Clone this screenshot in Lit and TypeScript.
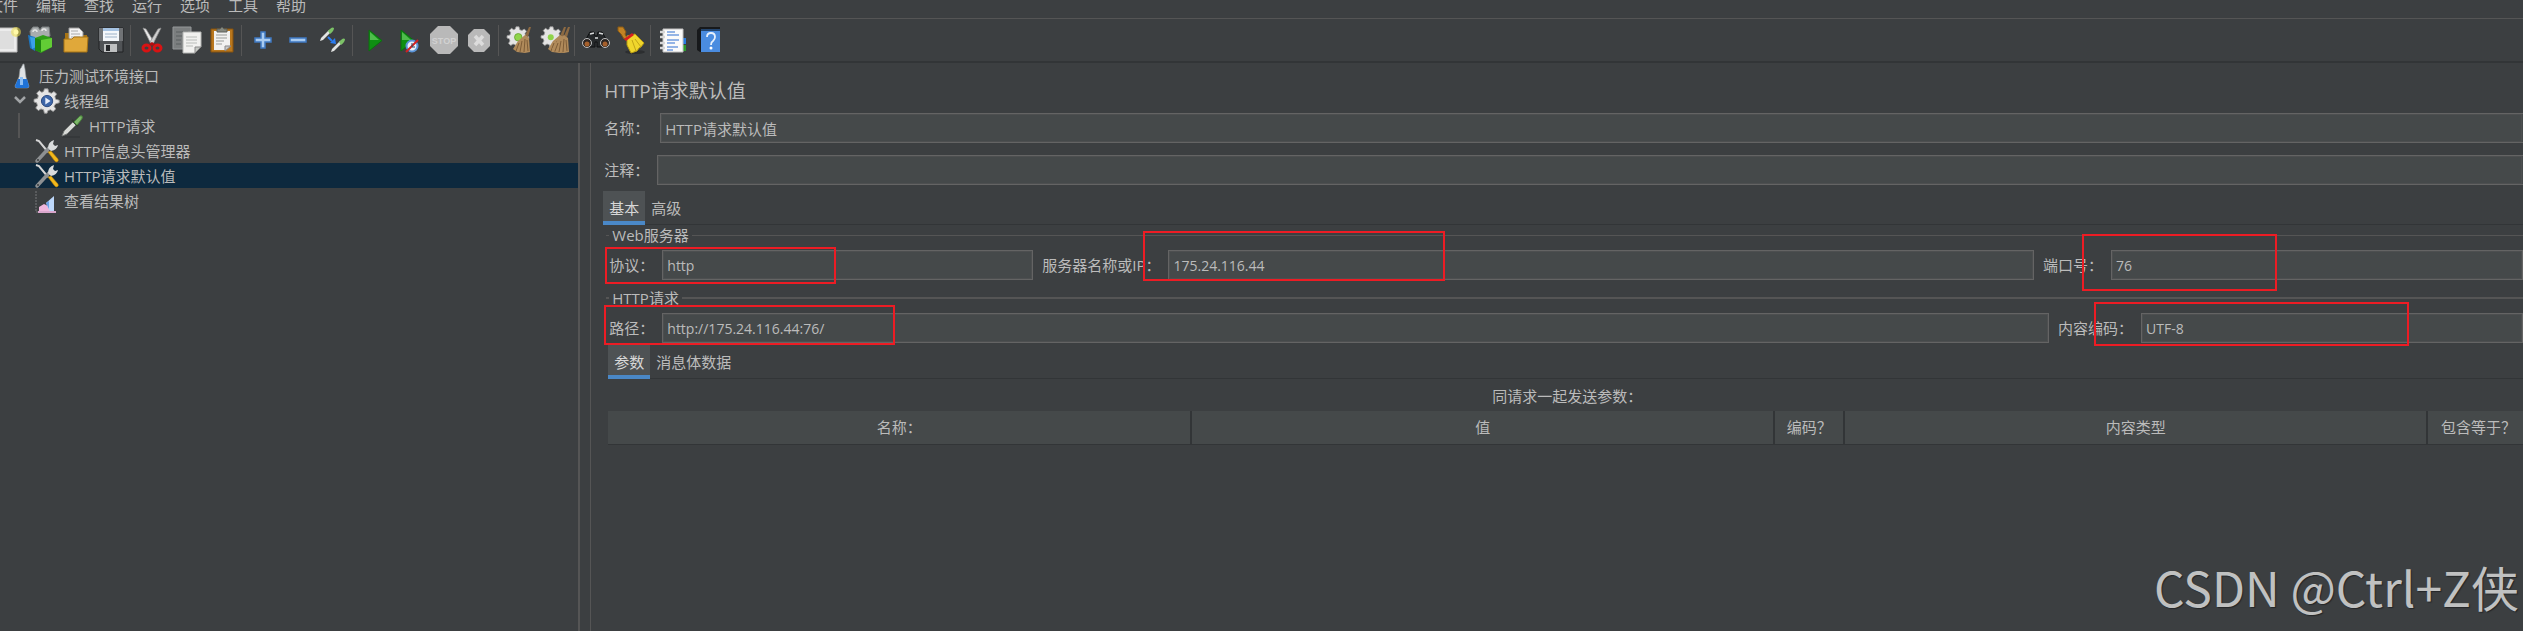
import { LitElement, html, css, svg, nothing, type TemplateResult } from "lit";
import { customElement, state } from "lit/decorators.js";

const dropper = svg`
  <path d="M2 22l2-5 9-9 3 3-9 9z" fill="#d9dbd8" stroke="#777a78" stroke-width="1"/>
  <path d="M12 6l6 6" stroke="#2e3a2c" stroke-width="2"/>
  <path d="M14 8l4-4q2-3 4-2 1 2-1 4l-4 5z" fill="#7db56a" stroke="#4b8a3c" stroke-width="1"/>`;

const gear = svg`
  <path d="M12 1h4l1 4 3 1 3-2 3 3-2 3 1 3 4 1v3l-4 1-2 3 2 3-3 3-3-2-3 1-1 3h-3l-1-4-3-1-3 2-3-3 2-3-1-3-3-1v-3l4-1 1-3-2-3 3-3 3 2 2-1z" fill="#e4e4e4" stroke="#9a9a9a" stroke-width="1"/>`;

const brush = svg`
  <path d="M23 1l2 0-3 10-3-1z" fill="#8d6a42"/>
  <path d="M12 15l7-6 4 3 1 14-5 1-8-1-4-3z" fill="#b08a5a"/>
  <path d="M13 17l-3 8m6-10-2 11m5-13-1 13m3-12 1 11" stroke="#7d5c37" stroke-width="1" fill="none"/>`;

const icons: Record<string, TemplateResult> = {
  new: svg`<path d="M3 2h22v24H3z" fill="#ececec" stroke="#bdbdbd"/><path d="M6 5h16v18H6z" fill="#dedede"/>
    <circle cx="24" cy="6" r="5" fill="#f2e24c" opacity=".55"/><circle cx="24" cy="6" r="2.5" fill="#fff9a8"/>`,
  templates: svg`<path d="M3 5l3-4h5l2 3 2-3h7l1 9-6 3-13 1z" fill="#a9adae" stroke="#7d8182"/>
    <path d="M6 6a2 2 0 0 1 4 0m5-1a2 2 0 0 1 4 0" fill="none" stroke="#e6e6e6" stroke-width="1.5"/>
    <path d="M1 9l7 2v14l-5-3z" fill="#1d77c2"/><path d="M3 11l8 1v8l-6 3z" fill="#3ba0e8"/>
    <path d="M8 12l8-3 9 3v9l-11 6-6-3z" fill="#2f9e17"/><path d="M14 14l11-2v9l-11 5z" fill="#62cc35"/><path d="M8 12l6 2v12l-6-2z" fill="#1f8511"/>`,
  open: svg`<path d="M3 7h6l2 2h14v17H3z" fill="#a87414"/><path d="M7 2h10l4 4v11H7z" fill="#f3f3f3" stroke="#999"/>
    <path d="M9 5h7M9 8h9M9 11h9" stroke="#aaa"/><path d="M2 13h8l2-2h14l-1 15H2z" fill="#e0a83a" stroke="#a87414"/>`,
  save: svg`<path d="M2 2h24v24H5l-3-3z" fill="#505356" stroke="#202224"/><path d="M2 2h24v13H2z" fill="#707376"/><path d="M6 2h16v13H6z" fill="#f4f7fa"/>
    <path d="M6 2h16v3H6z" fill="#a6c3e2"/><path d="M8 8h12M8 11h12" stroke="#9db2c8"/><path d="M7 18h13v8H7z" fill="#bfc1c2"/><path d="M9 19h4v6H9z" fill="#26282a"/>`,
  cut: svg`<path d="M5 2l3 1 8 13-3 2z" fill="#e8e8e8" stroke="#8d8d8d" stroke-width=".7"/><path d="M23 2l-3 1-8 13 3 2z" fill="#cfcfcf" stroke="#8d8d8d" stroke-width=".7"/>
    <ellipse cx="8.500" cy="22" rx="3.500" ry="3" fill="none" stroke="#d81313" stroke-width="3"/><ellipse cx="19.500" cy="22" rx="3.500" ry="3" fill="none" stroke="#d81313" stroke-width="3"/><path d="M11 18l3-2 3 2-3 2z" fill="#b50c0c"/>`,
  copy: svg`<path d="M0 1h18v22H0z" fill="#7b7e7f" stroke="#95989a"/><path d="M3 6h12M3 10h6M3 14h5M3 18h5" stroke="#5b5e60"/>
    <path d="M10 6h18v15l-6 6H10z" fill="#f1f1ef" stroke="#b4b6b4"/><path d="M13 11h11M13 14h11M13 17h11M13 20h7" stroke="#b9bcb9"/><path d="M22 27v-6h6z" fill="#c4c7c2" stroke="#888"/>`,
  paste: svg`<path d="M3 3h22v23H3z" fill="#b9771d" stroke="#85530e"/><path d="M6 5h16v15l-4 4H6z" fill="#f2f2f0"/>
    <path d="M8 9h11M8 12h11M8 15h8M8 18h6" stroke="#999c98"/><path d="M9 6V3h3l2-2 2 2h3v3z" fill="#85887f" stroke="#5d605a"/><path d="M17 25v-5h6z" fill="#ccc" stroke="#888"/>`,
  plus: svg`<path d="M12 6h4v6h6v4h-6v6h-4v-6H6v-4h6z" fill="#a9cbf0" stroke="#3f7ac2" stroke-width="1.500"/>`,
  minus: svg`<path d="M6 12h16v4H6z" fill="#a9cbf0" stroke="#3f7ac2" stroke-width="1.500"/>`,
  toggle: svg`<path d="M1 15l1-3 8-8 2 2-8 8z" fill="#e2e4e2"/><path d="M9 5q4-5 6-3 0 3-4 6z" fill="#7cc267"/>
    <path d="M12 26l1-3 8-8 2 2-8 8z" fill="#e2e4e2"/><path d="M20 16q4-5 6-3 0 3-4 6z" fill="#7cc267"/>
    <path d="M9 11l4 4" stroke="#2b7cf0" stroke-width="2"/><path d="M17 18l-6-1 5-5z" fill="#2b7cf0"/>`,
  play: svg`<path d="M9 4l13 10.500L9 25z" fill="#0e8f12" stroke="#0c6e0f"/><path d="M10 6l9 8h-9z" fill="#4fbd4c"/>`,
  playNow: svg`<path d="M6 4l13 10.500L6 25z" fill="#0e8f12" stroke="#0c6e0f"/><path d="M7 6l9 8H7z" fill="#4fbd4c"/>
    <circle cx="17" cy="20" r="5.500" fill="#e8f0fa" stroke="#5a93d6" stroke-width="2"/><path d="M11 26l12-12" stroke="#d32020" stroke-width="2"/><path d="M17 17v4h3" stroke="#30485f" fill="none"/>`,
  stop: svg`<path d="M8 0h12l8 8v12l-8 8H8l-8-8V8z" fill="#b9b9b9"/><text x="14" y="18" text-anchor="middle" font-size="9" font-weight="700" fill="#d2d2d2" font-family="Liberation Sans, sans-serif">STOP</text>`,
  shutdown: svg`<path d="M9 3h10l6 6v11l-6 6H9l-6-6V9z" fill="#b9b9b9"/><path d="M10 10l8 9m0-9l-8 9" stroke="#dcdcdc" stroke-width="3.500"/>`,
  clear: svg`<g transform="translate(1 0) scale(.75)">${gear}<circle cx="15" cy="15" r="5" fill="#8fd44a" stroke="#5f9e2a"/></g>${brush}`,
  clearAll: svg`<g transform="translate(0 0) scale(.75)">${gear}<circle cx="13" cy="15" r="4" fill="#8fd44a"/></g>${brush}<g transform="translate(4 0)">${brush}</g>`,
  find: svg`<path d="M4 13l4-7h4l1 4h2l1-4h4l4 7v8h-9v-5h-2v5H4z" fill="#26292b" stroke="#0f1112"/>
    <path d="M8 8l4-1M17 7l4 1M13 12h3" stroke="#d8dadb" stroke-width="1.500"/><circle cx="5" cy="17" r="4.500" fill="#2b2522" stroke="#bfc1c2"/><circle cx="23" cy="17" r="4.500" fill="#2b2522" stroke="#bfc1c2"/><circle cx="5" cy="18" r="2.500" fill="#a5602c"/><circle cx="23" cy="18" r="2.500" fill="#a5602c"/>`,
  broom: svg`<ellipse cx="18" cy="26" rx="10" ry="2" fill="#2c2e30"/><path d="M1 1h5l3 5-1 2 2 4-3 1-3-5-3-3z" fill="#c28324" stroke="#8a5a12"/>
    <path d="M10 10l8-2 9 9-3 4-2 1-2 3-6 2-4-8z" fill="#f0d62c" stroke="#b79b12"/><path d="M15 14l4 11m-1-12l6 8" stroke="#c2a417"/><path d="M7 13l8-6 2 2-8 6z" fill="#d62020"/>`,
  log: svg`<path d="M22 12h6v6h-6z" fill="#2a7de0"/><path d="M22 19h6v6h-6z" fill="#2b9a2b"/><path d="M5 3h20v23H5z" fill="#fafafa" stroke="#c2c2c2"/>
    <path d="M9 6h8M9 9h12M9 14h12M9 17h8M9 21h11M9 24h6" stroke="#2f6fd0" stroke-width="1.200"/><path d="M2 6h5M2 11h5M2 17h5M2 22h5" stroke="#d6d6d6" stroke-width="2.500"/>`,
  help: svg`<path d="M4 4l3-3h20v25H7l-3-2z" fill="#17191b"/><path d="M8 3h19v23H8z" fill="#4a8ce0"/><path d="M8 3h19v2H8z" fill="#24466f"/>
    <path d="M14 11q0-4 4-4t4 4q0 2-2 4-2 1-2 4" fill="none" stroke="#e6f0fc" stroke-width="1.800"/><circle cx="18" cy="22" r="1.500" fill="#fff"/>`,
  flask: svg`<path d="M11 4l2-4h1l1 5 1 8 3 9q0 2-2 2H7q-2 0-2-2l4-9 1-8z" fill="#dfe3e6" stroke="#8c9194" stroke-width=".6"/><path d="M8 15h9l2 7q0 2-2 2H7q-2 0-2-2z" fill="#1f73d8"/><path d="M10 13h3v8h-3z" fill="#8ec0f5"/>`,
  threads: svg`<g transform="translate(-1 -1) scale(.87)">${gear}<circle cx="15" cy="15" r="6.500" fill="#3d66a8" stroke="#1f3f78"/><path d="M13 11l6 4-6 4z" fill="#e6eefb"/></g>`,
  dropper: svg`<path d="M2 23h18" stroke="#2f3234"/>${dropper}`,
  tools: svg`<path d="M1 1l3 1 9 11" fill="none" stroke="#d6d6d6" stroke-width="2"/><path d="M13 13l3-1 7 8q1 2-1 3-2 0-3-2z" fill="#f3b81b" stroke="#b98308" stroke-width=".6"/>
    <path d="M2 22l12-13" stroke="#8d9092" stroke-width="3.500" stroke-linecap="round"/><path d="M13 9q0-6 6-8l-1 4 2 2 3-1q-1 5-7 6z" fill="#d9dbdc"/><circle cx="3" cy="21" r="1" fill="#3c3f41"/>`,
  chart: svg`<path d="M1 2v21h20" fill="none" stroke="#77797b" stroke-dasharray="2 1"/><path d="M4 23v-5l5-3 4 2 3-3 3 9z" fill="#efb6dd"/><path d="M11 14l8-7v16h-4z" fill="#bcd7fa"/><path d="M11 14l3-2v8z" fill="#6aa0e6"/><path d="M3 22h18v2H3z" fill="#d9a6cc"/>`,
};

const toolbar: [string, string][][] = [
  [["new", "新建"], ["templates", "模板"], ["open", "打开"], ["save", "保存"]],
  [["cut", "剪切"], ["copy", "复制"], ["paste", "粘贴"]],
  [["plus", "展开"], ["minus", "折叠"], ["toggle", "切换"]],
  [["play", "启动"], ["playNow", "不停顿启动"], ["stop", "停止"], ["shutdown", "关闭"]],
  [["clear", "清除"], ["clearAll", "清除全部"]],
  [["find", "查找"], ["broom", "重置查找"]],
  [["log", "函数助手"], ["help", "帮助"]],
];

interface TreeNode { id: string; label: string; icon: string; level: number; open?: boolean; guide?: boolean }

const nodes: TreeNode[] = [
  { id: "plan", label: "压力测试环境接口", icon: "flask", level: 0, open: true },
  { id: "group", label: "线程组", icon: "threads", level: 1, open: true },
  { id: "request", label: "HTTP请求", icon: "dropper", level: 2, guide: true },
  { id: "headers", label: "HTTP信息头管理器", icon: "tools", level: 1 },
  { id: "defaults", label: "HTTP请求默认值", icon: "tools", level: 1 },
  { id: "results", label: "查看结果树", icon: "chart", level: 1 },
];

@customElement("app-root")
export class AppRoot extends LitElement {
  @state() private selected = "defaults";
  @state() private mainTab = "基本";
  @state() private bodyTab = "参数";

  static styles = css`
    :host {
      display: flex;
      flex-direction: column;
      position: relative;
      min-height: 100vh;
      overflow: hidden;
      background: #3c3f41;
      color: #bbbbbb;
      font: 15px/20px "Open Sans", "Noto Sans CJK SC", sans-serif;
    }
    * { box-sizing: border-box; }
    button, input { font: inherit; color: inherit; border: 0; padding: 0; margin: 0; background: none; }
    button { white-space: nowrap; }
    svg { display: block; overflow: visible; }

    .menu { display: flex; gap: 18px; height: 19px; border-bottom: 1px solid #555555; }
    .menu button { height: 20px; margin-top: -5px; }
    .menu button:first-child { margin-left: -12px; }

    .toolbar { display: flex; align-items: center; height: 44px; border-bottom: 2px solid #323537; }
    .tools { display: flex; align-items: center; }
    .tools:first-child { margin-left: -12px; }
    .tools + .tools::before { content: ""; width: 1px; height: 31px; margin: 0 3px 0 2px; background: #555555; }
    .tool { display: flex; justify-content: center; width: 35px; }

    .body { display: grid; grid-template-columns: 23% 10px minmax(0, 1fr); flex: 1; }
    .tree { border-right: 2px solid #555555; }
    .node { display: flex; align-items: center; width: 100%; height: 25px; text-align: left; }
    .node.selected { background: #0d293e; }
    .level0, .level1 { padding-left: 10px; }
    .level2 { padding-left: 18px; }
    .twist { width: 20px; margin-right: 5px; }
    .level0 .twist { width: 0; margin-right: 0; }
    .level2 .twist { width: 42px; margin-right: 0; }
    .node-icon { margin-right: 5px; }

    .content { border-left: 1px solid #555555; padding: 18px 0 0 12px; min-width: 0; }
    h1 { margin: 0 0 12px; padding-left: 1px; font-size: 19px; font-weight: 400; line-height: 20px; }
    .line { display: flex; align-items: center; gap: 11px; height: 30px; margin-bottom: 12px; padding-left: 1px; }
    .line.comment { margin-bottom: 6px; gap: 8px; }
    .line label, .field label { flex: none; }
    input { flex: 1; min-width: 0; height: 30px; padding: 0 4px; background: #45494a; border: 1px solid #646464; outline: 1px solid #4d4f50; outline-offset: -2px; }
    .line input { border-right: 0; }

    .tabs { display: flex; height: 34px; border-bottom: 1px solid #323537; }
    .tab { height: 34px; padding: 0 6px; }
    .tab.active { color: #d8d8d8; background: #4e5254; border-bottom: 4px solid #4a88c7; padding-top: 4px; }

    fieldset { margin: 0 0 0 3px; padding: 5px 0 8px 3px; min-width: 0; border: 0; border-top: 1px solid #555555; }
    fieldset.request { padding-bottom: 2px; border-top-width: 2px; }
    legend { height: 20px; padding: 0 3px; }
    .row { display: flex; gap: 9px; }
    .field { position: relative; display: flex; align-items: center; gap: 8px; min-width: 0; }
    .field input { font-size: 14px; }
    .protocol { flex: 424 1 0; }
    .server { flex: 992 1 0; }
    .port { flex: 480 1 0; }
    .path { flex: 1440 1 0; }
    .encoding { flex: 465 1 0; }

    .mark { position: absolute; border: 2px solid #ed1c24; pointer-events: none; }
    .protocol .mark { left: -4px; top: -3px; width: 231px; height: 37px; }
    .server .mark { left: 101px; top: -19px; width: 302px; height: 50px; }
    .port .mark { left: 39px; top: -16px; width: 195px; height: 57px; }
    .path .mark { left: -5px; top: -8px; width: 291px; height: 40px; }
    .encoding .mark { left: 36px; top: -11px; width: 315px; height: 44px; }

    .params { padding-left: 5px; }
    .caption { height: 32px; line-height: 34px; padding-left: 3px; text-align: center; }
    table { width: 100%; border-collapse: collapse; table-layout: fixed; }
    th { height: 33px; padding: 0; font-weight: 400; background: #45494a; border-right: 2px solid #323537; border-bottom: 1px solid #323537; }
    th:last-child { border-right: 0; padding-left: 6px; }
    .wide { width: 30.45%; }
    .narrow { width: 70px; }
    .last { width: 96px; }

    .watermark { position: absolute; right: 4px; bottom: 16px; font: 48px/58px "Noto Sans CJK SC", sans-serif; color: #c0c1c1; text-shadow: 1px 1px 1px #242628; white-space: nowrap; }
  `;

  private icon(name: string, size: number) {
    return html`<svg width=${size} height=${size} viewBox="0 0 ${size} ${size}" aria-hidden="true">${icons[name]}</svg>`;
  }

  private field(id: string, label: string, value: string) {
    return html`<div class="field ${id}">
      <label for=${id}>${label}</label><input id=${id} .value=${value} />
      <span class="mark"></span>
    </div>`;
  }

  private tabs(names: string[], active: string, pick: (name: string) => void) {
    return html`<div class="tabs" role="tablist">
      ${names.map((n) => html`<button class="tab ${n === active ? "active" : ""}" role="tab" aria-selected=${n === active} @click=${() => pick(n)}>${n}</button>`)}
    </div>`;
  }

  private node(n: TreeNode) {
    return html`<button class="node level${n.level} ${n.id === this.selected ? "selected" : ""}" @click=${() => (this.selected = n.id)}>
      <span class="twist">
        ${n.guide ? html`<svg width="2" height="25"><path d="M0 0h2v25H0z" fill="#555555"/></svg>` : nothing}
        ${n.open && n.level > 0 ? html`<svg width="20" height="12" viewBox="0 0 20 12"><path d="M5 2l5 5 5-5" fill="none" stroke="#a2a5a7" stroke-width="2.500"/></svg>` : nothing}
      </span>
      <span class="node-icon">${this.icon(n.icon, 24)}</span>
      <span>${n.label}</span>
    </button>`;
  }

  render() {
    return html`
      <nav class="menu">
        ${["文件", "编辑", "查找", "运行", "选项", "工具", "帮助"].map((m) => html`<button>${m}</button>`)}
      </nav>
      <div class="toolbar">
        ${toolbar.map((group) => html`<div class="tools">
          ${group.map(([name, label]) => html`<button class="tool" aria-label=${label}>${this.icon(name, 28)}</button>`)}
        </div>`)}
      </div>
      <div class="body">
        <aside class="tree">${nodes.map((n) => this.node(n))}</aside>
        <div></div>
        <main class="content">
          <h1>HTTP请求默认值</h1>
          <div class="line"><label for="name">名称：</label><input id="name" .value=${"HTTP请求默认值"} /></div>
          <div class="line comment"><label for="comment">注释：</label><input id="comment" /></div>
          ${this.tabs(["基本", "高级"], this.mainTab, (n) => (this.mainTab = n))}
          <fieldset>
            <legend>Web服务器</legend>
            <div class="row">
              ${this.field("protocol", "协议：", "http")}
              ${this.field("server", "服务器名称或IP：", "175.24.116.44")}
              ${this.field("port", "端口号：", "76")}
            </div>
          </fieldset>
          <fieldset class="request">
            <legend>HTTP请求</legend>
            <div class="row">
              ${this.field("path", "路径：", "http://175.24.116.44:76/")}
              ${this.field("encoding", "内容编码：", "UTF-8")}
            </div>
          </fieldset>
          <div class="params">
            ${this.tabs(["参数", "消息体数据"], this.bodyTab, (n) => (this.bodyTab = n))}
            <div class="caption">同请求一起发送参数：</div>
            <table>
              <colgroup><col class="wide" /><col class="wide" /><col class="narrow" /><col /><col class="last" /></colgroup>
              <thead><tr><th>名称：</th><th>值</th><th>编码？</th><th>内容类型</th><th>包含等于？</th></tr></thead>
            </table>
          </div>
        </main>
      </div>
      <div class="watermark">CSDN @Ctrl+Z侠</div>
    `;
  }
}
